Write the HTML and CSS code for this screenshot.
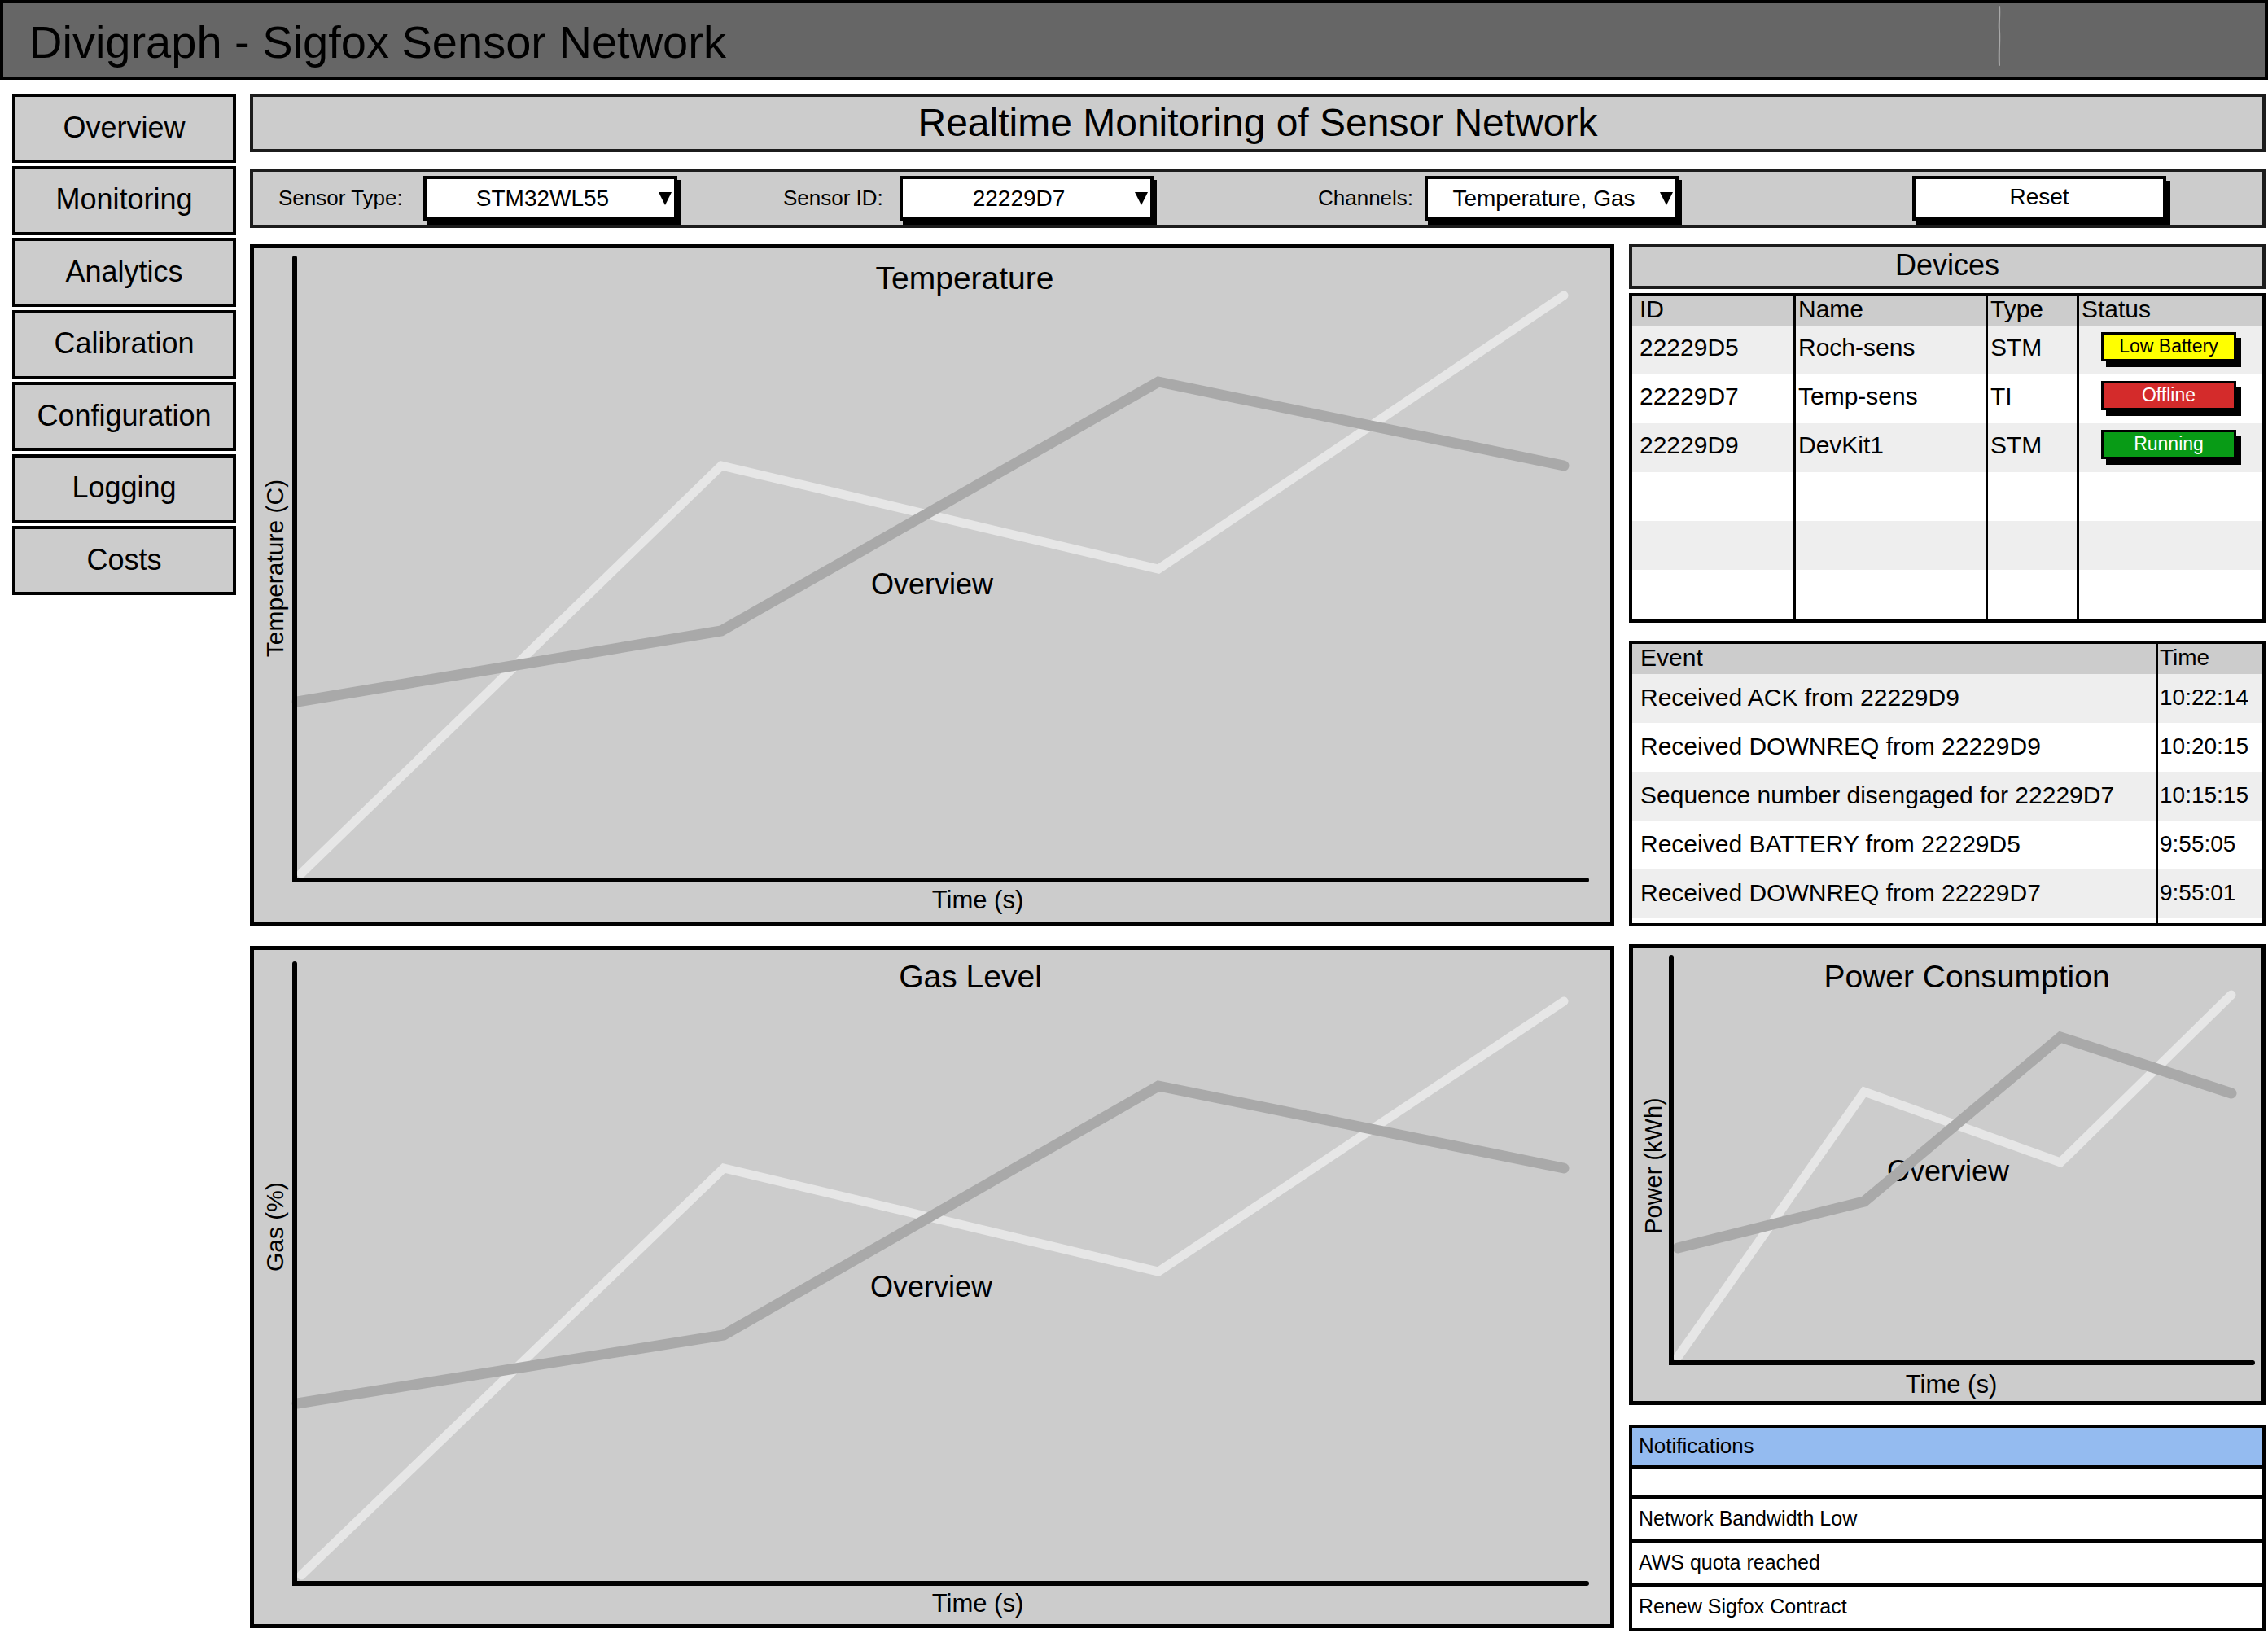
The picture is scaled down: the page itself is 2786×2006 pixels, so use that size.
FILE: index.html
```html
<!DOCTYPE html>
<html lang="en">
<head>
<meta charset="utf-8">
<title>Divigraph - Sigfox Sensor Network</title>
<link rel="stylesheet" href="styles.css">
</head>
<body>
<header class="topbar">
  <h1 class="app-title">Divigraph - Sigfox Sensor Network</h1>
  <svg class="scribble" width="10" height="76" viewBox="0 0 10 76" aria-hidden="true">
    <path d="M5 2 C 6 14, 4 22, 5 32 C 6 44, 4 56, 5 74" stroke="#a9a9a9" stroke-width="2" fill="none" stroke-linecap="round"/>
  </svg>
</header>

<div class="layout">
  <nav class="sidenav">
    <div class="nav-btn">Overview</div>
    <div class="nav-btn">Monitoring</div>
    <div class="nav-btn">Analytics</div>
    <div class="nav-btn">Calibration</div>
    <div class="nav-btn">Configuration</div>
    <div class="nav-btn">Logging</div>
    <div class="nav-btn">Costs</div>
  </nav>

  <main class="main">
    <div class="page-title">Realtime Monitoring of Sensor Network</div>

    <div class="filters">
      <span class="f-label f-type">Sensor Type:</span>
      <div class="select"><span class="select-value">STM32WL55</span><span class="select-arrow"></span></div>
      <span class="f-label f-id">Sensor ID:</span>
      <div class="select"><span class="select-value">22229D7</span><span class="select-arrow"></span></div>
      <span class="f-label f-ch">Channels:</span>
      <div class="select"><span class="select-value">Temperature, Gas</span><span class="select-arrow"></span></div>
      <div class="reset">Reset</div>
    </div>

    <div class="content">
      <div class="col-left">
        <section class="chart chart-big">
          <div class="c-title ct-temp">Temperature</div>
          <div class="c-center cc-big">Overview</div>
          <div class="c-xlabel cx-big">Time (s)</div>
          <div class="c-ylabel cy-temp">Temperature (C)</div>
          <svg class="c-plot" width="1666" height="828" viewBox="0 0 1666 828" aria-hidden="true">
            <polyline points="58,768 574,267 1111,394 1609,58" class="ln-light"/>
            <polyline points="53,557 574,470 1111,164 1609,267" class="ln-dark"/>
            <path d="M50 12 L50 776 L1637 776" class="axis"/>
          </svg>
        </section>

        <section class="chart chart-big">
          <div class="c-title ct-gas">Gas Level</div>
          <div class="c-center cc-gas">Overview</div>
          <div class="c-xlabel cx-gas">Time (s)</div>
          <div class="c-ylabel cy-gas">Gas (%)</div>
          <svg class="c-plot" width="1666" height="828" viewBox="0 0 1666 828" aria-hidden="true">
            <polyline points="58,768 577,268 1111,395 1609,63" class="ln-light"/>
            <polyline points="53,557 577,473 1111,167 1609,268" class="ln-dark"/>
            <path d="M50 17 L50 778 L1637 778" class="axis"/>
          </svg>
        </section>
      </div>

      <div class="col-right">
        <div class="devices-title">Devices</div>

        <div class="devices">
          <div class="d-row d-head">
            <div class="d-cell">ID</div><div class="d-cell">Name</div><div class="d-cell">Type</div><div class="d-cell">Status</div>
          </div>
          <div class="d-row alt">
            <div class="d-cell">22229D5</div><div class="d-cell">Roch-sens</div><div class="d-cell">STM</div>
            <div class="d-cell"><span class="badge b-yellow">Low Battery</span></div>
          </div>
          <div class="d-row">
            <div class="d-cell">22229D7</div><div class="d-cell">Temp-sens</div><div class="d-cell">TI</div>
            <div class="d-cell"><span class="badge b-red">Offline</span></div>
          </div>
          <div class="d-row alt">
            <div class="d-cell">22229D9</div><div class="d-cell">DevKit1</div><div class="d-cell">STM</div>
            <div class="d-cell"><span class="badge b-green">Running</span></div>
          </div>
          <div class="d-row"><div class="d-cell"></div><div class="d-cell"></div><div class="d-cell"></div><div class="d-cell"></div></div>
          <div class="d-row alt"><div class="d-cell"></div><div class="d-cell"></div><div class="d-cell"></div><div class="d-cell"></div></div>
          <div class="d-row"><div class="d-cell"></div><div class="d-cell"></div><div class="d-cell"></div><div class="d-cell"></div></div>
          <div class="d-row alt"><div class="d-cell"></div><div class="d-cell"></div><div class="d-cell"></div><div class="d-cell"></div></div>
        </div>

        <div class="events">
          <div class="e-row e-head"><div class="e-cell">Event</div><div class="e-cell e-time">Time</div></div>
          <div class="e-row alt"><div class="e-cell">Received ACK from 22229D9</div><div class="e-cell e-time">10:22:14</div></div>
          <div class="e-row"><div class="e-cell">Received DOWNREQ from 22229D9</div><div class="e-cell e-time">10:20:15</div></div>
          <div class="e-row alt"><div class="e-cell">Sequence number disengaged for 22229D7</div><div class="e-cell e-time">10:15:15</div></div>
          <div class="e-row"><div class="e-cell">Received BATTERY from 22229D5</div><div class="e-cell e-time">9:55:05</div></div>
          <div class="e-row alt"><div class="e-cell">Received DOWNREQ from 22229D7</div><div class="e-cell e-time">9:55:01</div></div>
          <div class="e-row"><div class="e-cell"></div><div class="e-cell e-time"></div></div>
        </div>

        <section class="chart chart-small">
          <div class="c-title ct-power">Power Consumption</div>
          <div class="c-center cc-power">Overview</div>
          <div class="c-xlabel cx-power">Time (s)</div>
          <div class="c-ylabel cy-power">Power (kWh)</div>
          <svg class="c-plot" width="772" height="556" viewBox="0 0 772 556" aria-hidden="true">
            <polyline points="55,502 284,176 525,263 735,57" class="ln-light"/>
            <polyline points="55,368 284,311 525,109 735,178" class="ln-dark"/>
            <path d="M47 11 L47 509 L761 509" class="axis"/>
          </svg>
        </section>

        <div class="notifications">
          <div class="n-head">Notifications</div>
          <div class="n-row n-empty"></div>
          <div class="n-row">Network Bandwidth Low</div>
          <div class="n-row">AWS quota reached</div>
          <div class="n-row n-last">Renew Sigfox Contract</div>
        </div>
      </div>
    </div>
  </main>
</div>
</body>
</html>
```

FILE: styles.css
```css
* { box-sizing: border-box; }

html, body { margin: 0; padding: 0; }

body {
  width: 2786px;
  height: 2006px;
  overflow: hidden;
  background: #ffffff;
  color: #000000;
  font-family: "Liberation Sans", Arial, sans-serif;
}

/* ---------- top bar ---------- */
.topbar {
  position: relative;
  height: 98px;
  border: 4px solid #000;
  background: #666666;
  display: flex;
  align-items: center;
  padding: 6px 0 0 32px;
}
.app-title {
  margin: 0;
  font-size: 56px;
  font-weight: normal;
  line-height: 1;
}
.scribble {
  position: absolute;
  left: 2447px;
  top: 2px;
}

/* ---------- layout ---------- */
.layout {
  display: flex;
  gap: 17px;
  padding: 17px 3px 0 15px;
}

.sidenav {
  width: 275px;
  flex: none;
  display: flex;
  flex-direction: column;
  gap: 3.5px;
}
.nav-btn {
  height: 85px;
  border: 4px solid #000;
  background: #cccccc;
  display: flex;
  align-items: center;
  justify-content: center;
  font-size: 36px;
  padding-bottom: 2px;
}

.main {
  width: 2476px;
  flex: none;
  display: flex;
  flex-direction: column;
}

.page-title {
  height: 72px;
  border: 4px solid #1c1c1c;
  background: #cccccc;
  display: flex;
  align-items: center;
  justify-content: center;
  font-size: 48px;
  padding-bottom: 2px;
  margin-bottom: 20px;
}

/* ---------- filters ---------- */
.filters {
  height: 73px;
  border: 4px solid #1c1c1c;
  background: #cccccc;
  display: flex;
  align-items: center;
  padding-left: 31px;
  margin-bottom: 20px;
}
.f-label { font-size: 26px; flex: none; }
.f-type { width: 178px; }
.f-id { width: 143px; margin-left: 130px; }
.f-ch { width: 131px; margin-left: 202px; }

.select {
  width: 312px;
  height: 55px;
  flex: none;
  border: 4px solid #000;
  background: #fff;
  box-shadow: 4px 5px 0 #000;
  display: flex;
  align-items: center;
  padding-right: 3px;
  font-size: 28px;
}
.select-value { flex: 1; text-align: center; }
.select-arrow {
  width: 0;
  height: 0;
  border-left: 8px solid transparent;
  border-right: 8px solid transparent;
  border-top: 16px solid #000;
}

.reset {
  margin-left: 287px;
  width: 312px;
  height: 55px;
  flex: none;
  border: 4px solid #000;
  background: #fff;
  box-shadow: 5px 6px 0 #000;
  display: flex;
  align-items: center;
  justify-content: center;
  font-size: 28px;
  padding-bottom: 3px;
}

/* ---------- content grid ---------- */
.content {
  display: grid;
  grid-template-columns: 1676px 782px;
  column-gap: 18px;
}
.col-left {
  display: flex;
  flex-direction: column;
  gap: 24px;
}
.col-right {
  display: flex;
  flex-direction: column;
}

/* ---------- charts ---------- */
.chart {
  position: relative;
  border: 5px solid #000;
  background: #cccccc;
  overflow: hidden;
}
.chart-big { height: 838px; }
.chart-small { height: 566px; margin-bottom: 24px; }

.c-plot { position: absolute; left: 0; top: 0; }
.ln-light { fill: none; stroke: #e6e6e6; stroke-width: 11; stroke-linecap: round; stroke-linejoin: miter; }
.ln-dark { fill: none; stroke: #a9a9a9; stroke-width: 13; stroke-linecap: round; stroke-linejoin: miter; }
.axis { fill: none; stroke: #000; stroke-width: 6; stroke-linecap: round; stroke-linejoin: miter; }

.c-title, .c-center, .c-xlabel, .c-ylabel {
  position: absolute;
  line-height: 1;
  white-space: nowrap;
  transform: translate(-50%, -50%);
}
.c-title { font-size: 39px; }
.c-center { font-size: 36px; }
.c-xlabel { font-size: 31px; }
.c-ylabel { font-size: 30px; transform: translate(-50%, -50%) rotate(-90deg); }

.ct-temp { left: 873px; top: 36px; }
.cc-big { left: 833px; top: 413px; }
.cx-big { left: 889px; top: 800px; }
.cy-temp { left: 26px; top: 393px; }

.ct-gas { left: 880px; top: 32px; }
.cc-gas { left: 832px; top: 414px; }
.cx-gas { left: 889px; top: 802px; }
.cy-gas { left: 26px; top: 340px; }

.ct-power { left: 410px; top: 34px; }
.cc-power { left: 387px; top: 274px; }
.cx-power { left: 391px; top: 535px; }
.cy-power { left: 25px; top: 267px; font-size: 29px; }

/* ---------- devices ---------- */
.devices-title {
  height: 55px;
  border: 4px solid #1c1c1c;
  background: #cccccc;
  display: flex;
  align-items: center;
  justify-content: center;
  font-size: 36px;
  padding-bottom: 3px;
  margin-bottom: 5px;
}

.devices {
  height: 405px;
  border: 4px solid #000;
  background: #fff;
  overflow: hidden;
  margin-bottom: 22px;
}
.d-row {
  display: grid;
  grid-template-columns: 198px 236px 112px 1fr;
  height: 60px;
  background: #fff;
}
.d-row.alt { background: #eeeeee; }
.d-row.d-head { height: 36px; background: #cccccc; }
.d-cell {
  display: flex;
  align-items: center;
  font-size: 30px;
  padding-left: 3px;
  padding-bottom: 7px;
  border-left: 3px solid #000;
  white-space: nowrap;
}
.d-cell:first-child { border-left: 0; padding-left: 9px; }
.d-head .d-cell { align-items: flex-start; line-height: 32px; padding-bottom: 0; }

.badge {
  margin-left: 24px;
  margin-top: -2px;
  width: 166px;
  height: 36px;
  border: 3px solid #000;
  box-shadow: 6px 7px 0 #000;
  display: flex;
  align-items: center;
  justify-content: center;
  font-size: 23px;
}
.b-yellow { background: #ffff00; color: #000; }
.b-red { background: #d42b2b; color: #fff; }
.b-green { background: #089b16; color: #fff; }

/* ---------- events ---------- */
.events {
  height: 351px;
  border: 4px solid #000;
  background: #fff;
  overflow: hidden;
  margin-bottom: 22px;
}
.e-row {
  display: grid;
  grid-template-columns: 643px 1fr;
  height: 60px;
  background: #fff;
}
.e-row.alt { background: #eeeeee; }
.e-row.e-head { height: 37px; background: #cccccc; }
.e-cell {
  display: flex;
  align-items: center;
  font-size: 30px;
  padding-left: 10px;
  padding-bottom: 3px;
  white-space: nowrap;
}
.e-time {
  border-left: 3px solid #000;
  padding-left: 2px;
  font-size: 28px;
}

/* ---------- notifications ---------- */
.notifications {
  height: 254px;
  border: 4px solid #000;
  background: #fff;
  overflow: hidden;
}
.n-head {
  height: 46px;
  background: #94bbf0;
  display: flex;
  align-items: center;
  padding-left: 8px;
  padding-bottom: 2px;
  font-size: 26px;
}
.n-row {
  height: 54px;
  border-top: 4px solid #000;
  display: flex;
  align-items: center;
  padding-left: 8px;
  padding-bottom: 2px;
  font-size: 25px;
}
.n-row.n-empty { height: 37px; }
.n-row.n-last { height: 55px; }
```
